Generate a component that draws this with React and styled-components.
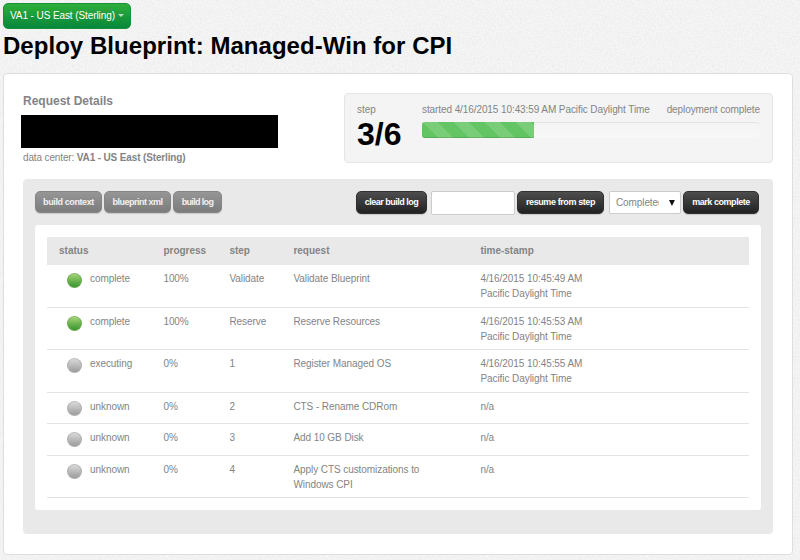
import React from 'react';
import styled, { createGlobalStyle } from 'styled-components';

const grain = `url("data:image/svg+xml,${encodeURIComponent(
  '<svg xmlns="http://www.w3.org/2000/svg" width="160" height="160"><filter id="n" color-interpolation-filters="sRGB"><feTurbulence type="fractalNoise" baseFrequency="0.55" numOctaves="2" stitchTiles="stitch"/><feColorMatrix type="matrix" values="0.07 0 0 0 0.915 0.07 0 0 0 0.915 0.07 0 0 0 0.915 0 0 0 0 1"/></filter><rect width="160" height="160" filter="url(#n)"/></svg>'
)}")`;

const GlobalStyle = createGlobalStyle`
  *, *::before, *::after { box-sizing: border-box; }
  body {
    margin: 0;
    background: #f1f1f1 ${grain};
    font: 10px/14px "Liberation Sans", Arial, sans-serif;
    color: #848484;
  }
  button, input { font-family: inherit; }
`;

const Page = styled.main`
  width: 800px;
  height: 560px;
  padding: 3px 7px 0 3px;
  overflow: hidden;
`;

const DataCenterButton = styled.button`
  display: flex;
  align-items: center;
  gap: 3px;
  width: 128px;
  height: 26px;
  padding: 0 0 1px 6px;
  border: 1px solid #189038;
  border-radius: 5px;
  background: linear-gradient(#2fae3a, #07873c);
  color: #fff;
  font-size: 10px;
  letter-spacing: -0.09px;
  white-space: nowrap;
`;

const Caret = styled.span`
  border: 3px solid transparent;
  border-top-color: #b5dfbd;
  border-bottom: 0;
`;

const Title = styled.h1`
  margin: 2px 0 12px;
  height: 30px;
  font-size: 24px;
  line-height: 30px;
  letter-spacing: 0.04px;
  color: #000;
  white-space: nowrap;
`;

const Card = styled.section`
  width: 790px;
  height: 482px;
  padding: 19px;
  border: 1px solid #dedede;
  border-radius: 4px;
  background: #fff;
`;

const Summary = styled.div`
  display: flex;
  justify-content: space-between;
  height: 86px;
`;

const Details = styled.div`
  padding-top: 1px;
`;

const DetailsHeading = styled.h2`
  margin: 0;
  font-size: 12px;
  line-height: 14px;
`;

const Redacted = styled.div`
  width: 257px;
  height: 33px;
  margin: 7px 0 3px -2px;
  background: #000;
`;

const DataCenter = styled.div`
  letter-spacing: -0.14px;
  white-space: nowrap;
`;

const ProgressPanel = styled.div`
  display: flex;
  width: 429px;
  height: 70px;
  padding: 9px 12px 8px;
  border: 1px solid #e5e5e5;
  border-radius: 4px;
  background: #f4f4f4;
`;

const StepCount = styled.div`
  width: 65px;
`;

const StepValue = styled.div`
  font-size: 32px;
  line-height: 34px;
  font-weight: bold;
  color: #000;
`;

const ProgressColumn = styled.div`
  flex: 1;
`;

const ProgressLabels = styled.div`
  display: flex;
  justify-content: space-between;
  letter-spacing: -0.09px;
  white-space: nowrap;
`;

const Track = styled.div`
  height: 16px;
  margin-top: 5px;
  border-radius: 3px;
  background: linear-gradient(#f4f4f4, #f8f8f8);
  box-shadow: inset 0 1px 1px rgba(0, 0, 0, 0.07);
`;

const Fill = styled.div`
  width: 111.5px;
  height: 16px;
  border-radius: 3px 0 0 3px;
  background: #62c462 linear-gradient(45deg, rgba(255, 255, 255, 0.15) 25%, transparent 25%, transparent 50%, rgba(255, 255, 255, 0.15) 50%, rgba(255, 255, 255, 0.15) 75%, transparent 75%) 0 0 / 31px 31px;
  box-shadow: inset 0 -1px 0 rgba(0, 0, 0, 0.12);
`;

const LogPanel = styled.div`
  width: 750px;
  height: 355px;
  padding: 12px;
  border-radius: 4px;
  background: #e9e9e9;
`;

const Toolbar = styled.div`
  display: flex;
  justify-content: space-between;
  height: 34px;
`;

const Group = styled.div`
  display: flex;
  gap: 2px;
  padding-right: 2px;
`;

const ActionButton = styled.button`
  width: ${(p) => p.$width}px;
  height: ${(p) => (p.$dark ? 23 : 22)}px;
  padding: 0 0 1px;
  border: 1px solid ${(p) => (p.$dark ? '#303030' : '#858585')};
  border-radius: 5px;
  background: ${(p) => (p.$dark ? 'linear-gradient(#4d4d4d, #222)' : 'linear-gradient(#969696, #7c7c7c)')};
  box-shadow: 0 1px 1px rgba(0, 0, 0, 0.15);
  color: ${(p) => (p.$dark ? '#fff' : '#f1f1f1')};
  font-size: 9px;
  font-weight: bold;
  letter-spacing: ${(p) => p.$tracking || -0.5}px;
  white-space: nowrap;
`;

const StepInput = styled.input`
  width: 84px;
  height: 24px;
  margin-left: 2px;
  border: 1px solid #ccc;
  border-radius: 2px;
  background: #fff;
`;

const StatusSelect = styled.div`
  display: flex;
  align-items: center;
  width: 72px;
  height: 23px;
  margin-left: 3px;
  padding: 1px 5px 0 6px;
  border: 1px solid #ccc;
  border-radius: 2px;
  background: #fff;
`;

const SelectText = styled.span`
  width: 44px;
  margin-right: 10px;
  overflow: hidden;
  letter-spacing: -0.1px;
`;

const TablePanel = styled.div`
  width: 726px;
  height: 285px;
  padding: 12px;
  border-radius: 3px;
  background: #fff;
`;

const Row = styled.div`
  display: grid;
  grid-template-columns: 104.4px 66px 64px 187px 1fr;
  height: ${(p) => p.$height}px;
  padding: 7px 0 0 12px;
  border-bottom: 1px solid #e3e3e3;
  line-height: 14.5px;
  white-space: pre-line;
`;

const HeaderRow = styled(Row)`
  border-bottom-color: #e9e9e9;
  background: #e9e9e9;
  font-weight: bold;
`;

const Cell = styled.span`
  letter-spacing: -0.07px;
`;

const Status = styled.span`
  display: flex;
  align-items: flex-start;
  gap: 8px;
  padding-left: 8px;
  letter-spacing: -0.07px;
`;

const Orb = styled.span`
  width: 15px;
  height: 15px;
  margin-top: 1px;
  border: 1px solid ${(p) => (p.$done ? '#6dac50' : '#b0b0b0')};
  border-top-color: ${(p) => (p.$done ? '#88b773' : '#bebebe')};
  border-radius: 50%;
  background: ${(p) => (p.$done ? 'linear-gradient(#a5d575, #36952f)' : 'linear-gradient(#dadada, #9b9b9b)')};
`;

const rows = [
  { status: 'complete', progress: '100%', step: 'Validate', request: 'Validate Blueprint', time: '4/16/2015 10:45:49 AM\nPacific Daylight Time', height: 43 },
  { status: 'complete', progress: '100%', step: 'Reserve', request: 'Reserve Resources', time: '4/16/2015 10:45:53 AM\nPacific Daylight Time', height: 42 },
  { status: 'executing', progress: '0%', step: '1', request: 'Register Managed OS', time: '4/16/2015 10:45:55 AM\nPacific Daylight Time', height: 43 },
  { status: 'unknown', progress: '0%', step: '2', request: 'CTS - Rename CDRom', time: 'n/a', height: 31 },
  { status: 'unknown', progress: '0%', step: '3', request: 'Add 10 GB Disk', time: 'n/a', height: 32 },
  { status: 'unknown', progress: '0%', step: '4', request: 'Apply CTS customizations to\nWindows CPI', time: 'n/a', height: 42 },
];

export default function App() {
  return (
    <Page>
      <GlobalStyle />
      <DataCenterButton>VA1 - US East (Sterling)<Caret /></DataCenterButton>
      <Title>Deploy Blueprint: Managed-Win for CPI</Title>
      <Card>
        <Summary>
          <Details>
            <DetailsHeading>Request Details</DetailsHeading>
            <Redacted />
            <DataCenter>data center: <b>VA1 - US East (Sterling)</b></DataCenter>
          </Details>
          <ProgressPanel>
            <StepCount>step<StepValue>3/6</StepValue></StepCount>
            <ProgressColumn>
              <ProgressLabels>
                <span>started 4/16/2015 10:43:59 AM Pacific Daylight Time</span>
                <span>deployment complete</span>
              </ProgressLabels>
              <Track><Fill /></Track>
            </ProgressColumn>
          </ProgressPanel>
        </Summary>
        <LogPanel>
          <Toolbar>
            <Group>
              <ActionButton $width={67} $tracking={-0.4}>build context</ActionButton>
              <ActionButton $width={67}>blueprint xml</ActionButton>
              <ActionButton $width={49} $tracking={-0.65}>build log</ActionButton>
            </Group>
            <Group>
              <ActionButton $dark $width={71}>clear build log</ActionButton>
              <StepInput aria-label="Step" />
              <ActionButton $dark $width={87} $tracking={-0.4}>resume from step</ActionButton>
              <StatusSelect>
                <SelectText>Completed</SelectText>
                <svg width="6" height="6" viewBox="0 0 6 6"><path d="M0 0H6L3 6Z" fill="#111" /></svg>
              </StatusSelect>
              <ActionButton $dark $width={76} $tracking={-0.45}>mark complete</ActionButton>
            </Group>
          </Toolbar>
          <TablePanel>
            <HeaderRow $height={28}>
              <span>status</span><span>progress</span><span>step</span><span>request</span><span>time-stamp</span>
            </HeaderRow>
            {rows.map((row) => (
              <Row key={row.step} $height={row.height}>
                <Status><Orb $done={row.status === 'complete'} />{row.status}</Status>
                <Cell>{row.progress}</Cell>
                <Cell>{row.step}</Cell>
                <Cell>{row.request}</Cell>
                <Cell>{row.time}</Cell>
              </Row>
            ))}
          </TablePanel>
        </LogPanel>
      </Card>
    </Page>
  );
}
